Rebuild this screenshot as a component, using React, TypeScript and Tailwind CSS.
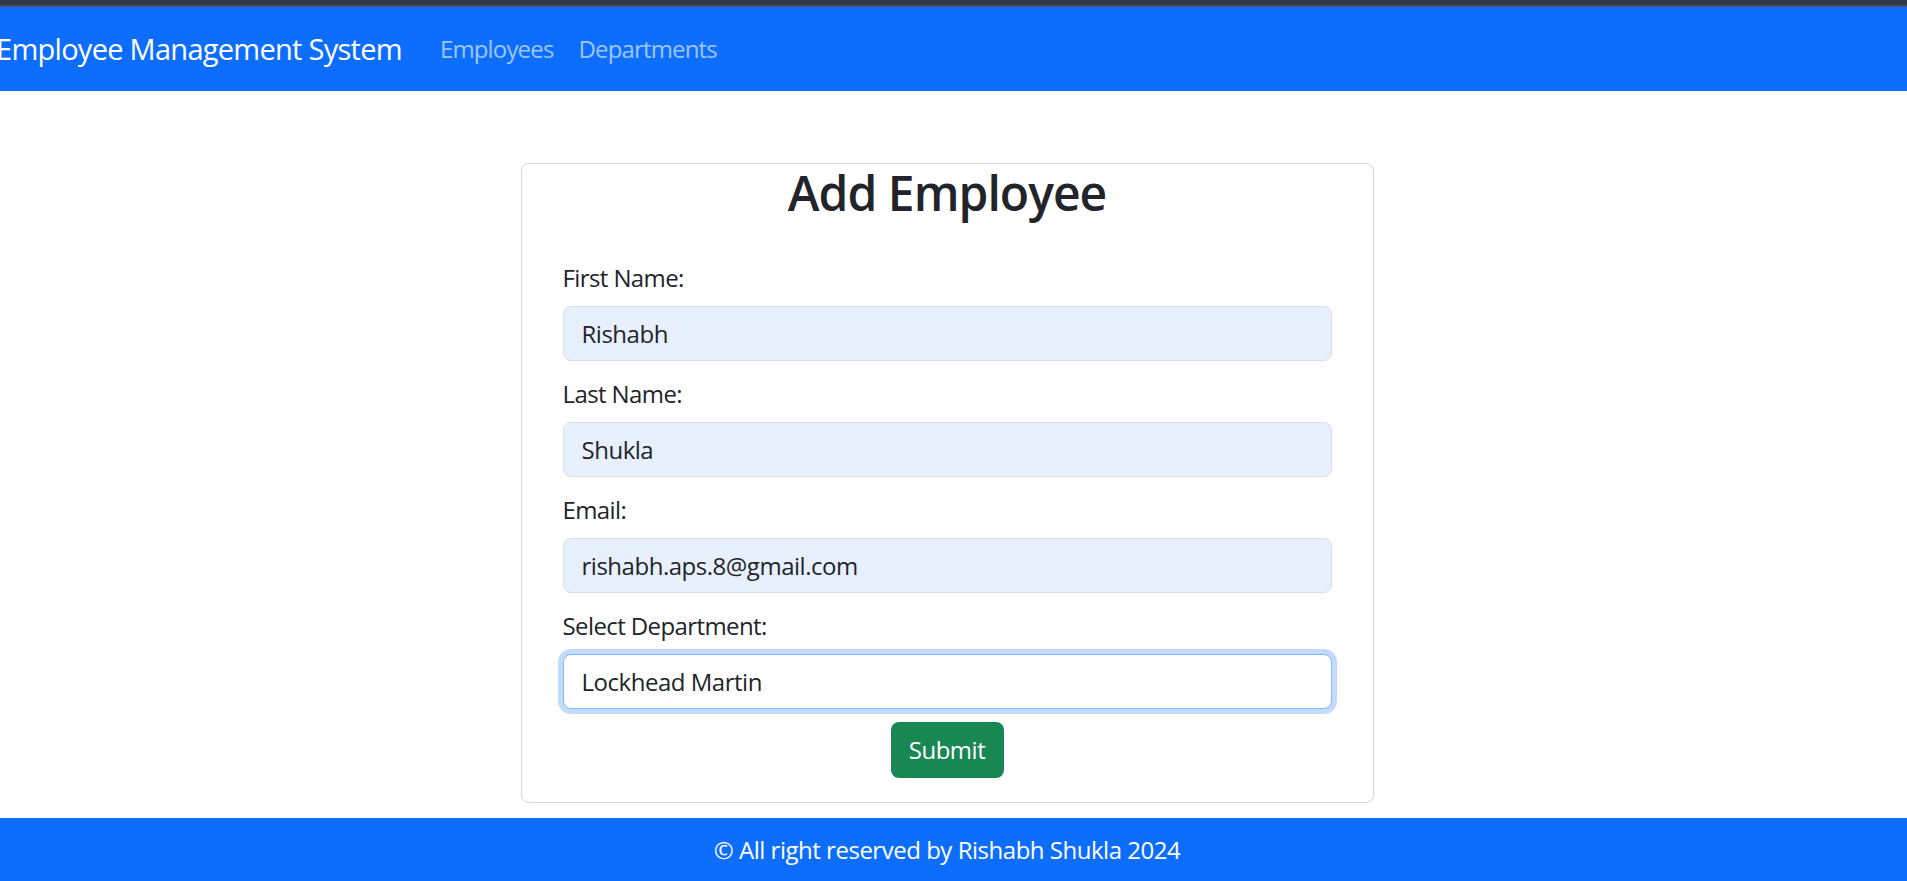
import React from "react";

const font = { fontFamily: '"Open Sans", "Noto Sans", sans-serif' };

function Field({ label, value, focused, first }: { label: string; value: string; focused?: boolean; first?: boolean }) {
  return (
    <div className={first ? "mt-[38px]" : "mt-[15px]"}>
      <label className="block text-[24px] leading-[36px] text-[#212529] mb-[10px] tracking-[-0.025em]">{label}</label>
      <div
        className={
          focused
            ? "h-[55px] rounded-[8px] border border-[#86b7fe] bg-white shadow-[0_0_0_5px_#c2dbfe] flex items-center px-[18px]"
            : "h-[55px] rounded-[8px] border border-[#d8dfea] bg-[#e8f0fe] flex items-center px-[18px]"
        }
      >
        <span className="text-[24px] text-[#212529] tracking-[-0.02em]">{value}</span>
      </div>
    </div>
  );
}

export default function App() {
  return (
    <div className="min-h-[881px] bg-white flex flex-col overflow-hidden" style={font}>
      <div className="h-[5px] bg-[#333a4a]" />
      <div className="h-[2px] bg-[#4a4e5a]" />
      <nav className="h-[84px] bg-[#0d6efd] flex items-center">
        <span className="ml-[-4px] text-[29px] text-white tracking-[-0.025em] whitespace-nowrap">Employee Management System</span>
        <div className="flex items-center ml-[38px] gap-[25px] text-[24px] text-[#9ec5fe] tracking-[-0.035em]">
          <span>Employees</span>
          <span>Departments</span>
        </div>
      </nav>
      <main className="flex justify-center pr-[13px] pt-[72px] pb-[15px]">
        <div className="w-[853px] border border-[#d6d6d6] rounded-[8px] px-[41px] pb-[24px]">
          <h2 className="text-center text-[48px] leading-[58px] font-semibold text-[#212529] tracking-[-0.02em]">Add Employee</h2>
          <Field first label="First Name:" value="Rishabh" />
          <Field label="Last Name:" value="Shukla" />
          <Field label="Email:" value="rishabh.aps.8@gmail.com" />
          <Field focused label="Select Department:" value="Lockhead Martin" />
          <div className="flex justify-center mt-[13px]">
            <button className="h-[56px] w-[113px] rounded-[8px] bg-[#198754] text-white text-[24px] tracking-[-0.02em]">Submit</button>
          </div>
        </div>
      </main>
      <footer className="flex-1 bg-[#0d6efd] flex items-start justify-center pr-[13px] pt-[14px]">
        <span className="text-[24px] leading-[36px] text-white tracking-[-0.02em]">© All right reserved by Rishabh Shukla 2024</span>
      </footer>
    </div>
  );
}
